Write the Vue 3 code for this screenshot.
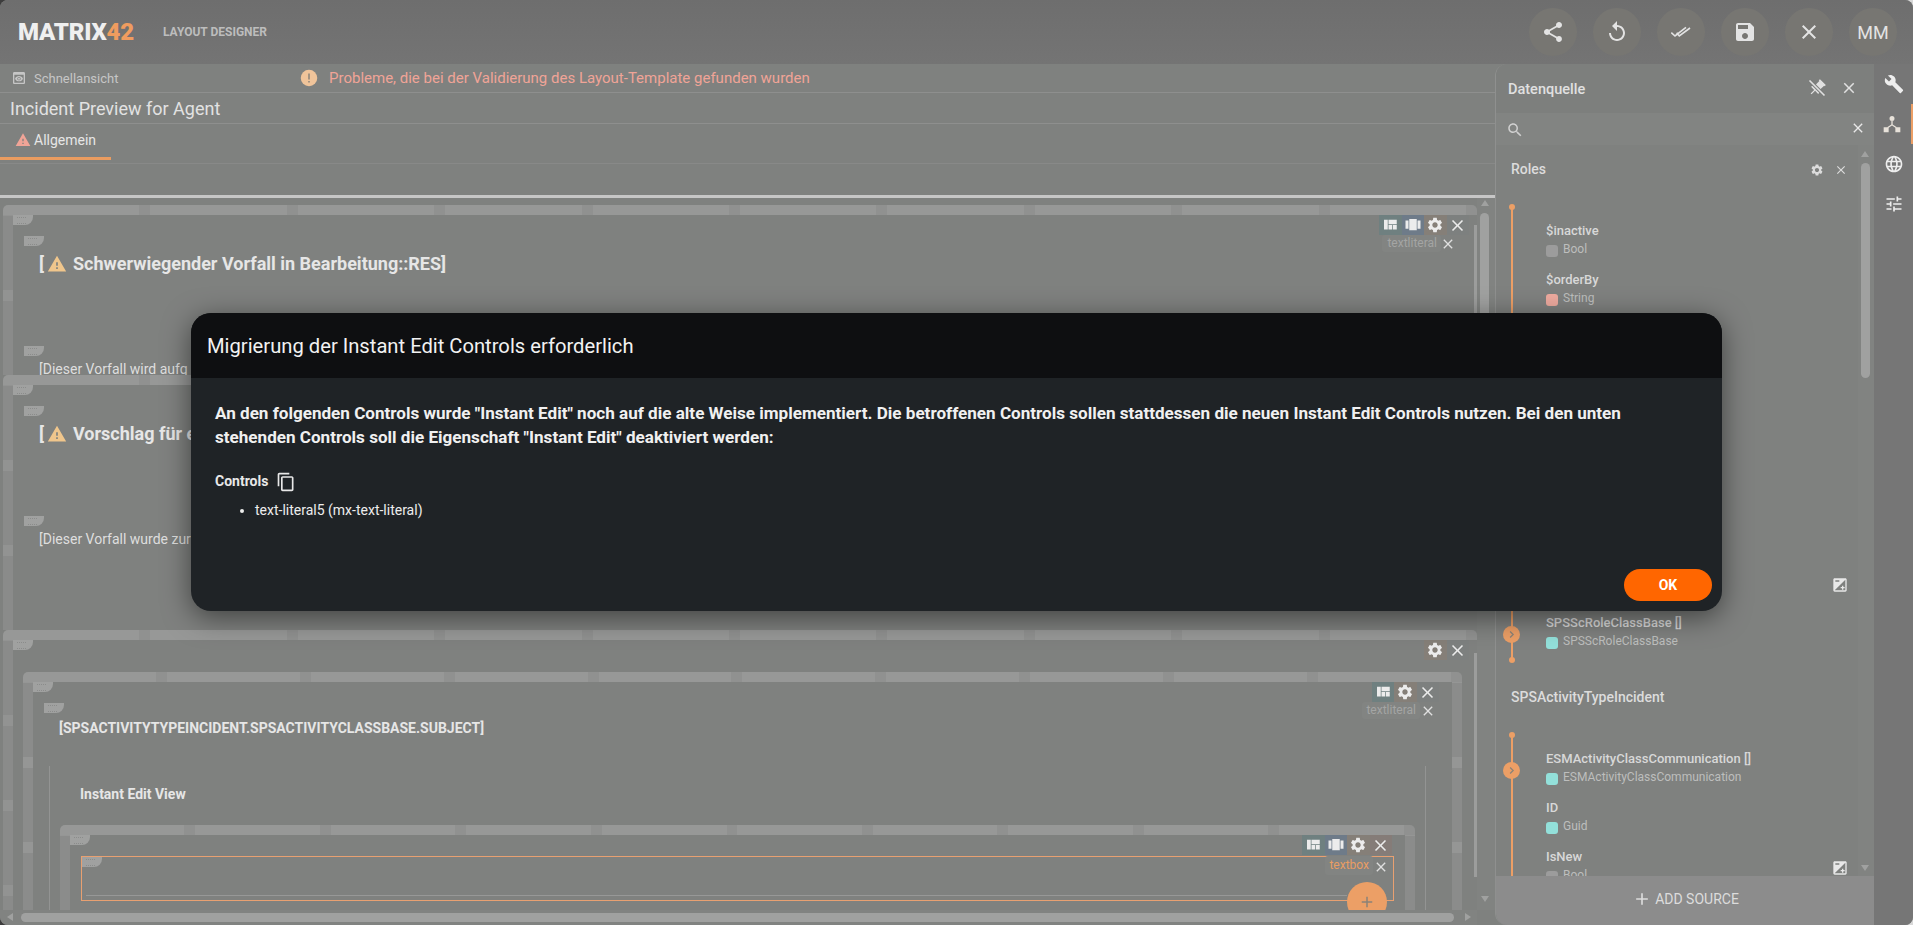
<script setup>
const icons = {
  share: 'M18 16.08c-.76 0-1.44.3-1.96.77L8.91 12.7c.05-.23.09-.46.09-.7s-.04-.47-.09-.7l7.05-4.11c.54.5 1.25.81 2.04.81 1.66 0 3-1.34 3-3s-1.34-3-3-3-3 1.34-3 3c0 .24.04.47.09.7L8.04 9.81C7.5 9.31 6.79 9 6 9c-1.66 0-3 1.34-3 3s1.34 3 3 3c.79 0 1.5-.31 2.04-.81l7.12 4.16c-.05.21-.08.43-.08.65 0 1.61 1.31 2.92 2.92 2.92s2.92-1.31 2.92-2.92-1.31-2.92-2.92-2.92z',
  replay: 'M12 5V1L7 6l5 5V7c3.31 0 6 2.69 6 6s-2.69 6-6 6-6-2.69-6-6H4c0 4.42 3.58 8 8 8s8-3.58 8-8-3.58-8-8-8z',
  save: 'M17 3H5c-1.11 0-2 .9-2 2v14c0 1.1.89 2 2 2h14c1.1 0 2-.9 2-2V7l-4-4zm-5 16c-1.66 0-3-1.34-3-3s1.34-3 3-3 3 1.34 3 3-1.34 3-3 3zm3-10H5V5h10v4z',
  close: 'M19 6.41L17.59 5 12 10.59 6.41 5 5 6.41 10.59 12 5 17.59 6.41 19 12 13.41 17.59 19 19 17.59 13.41 12z',
  wrench: 'M22.7 19l-9.1-9.1c.9-2.3.4-5-1.5-6.9-2-2-5-2.4-7.4-1.3L9 6 6 9 1.6 4.7C.4 7.1.9 10.1 2.9 12.1c1.9 1.9 4.6 2.4 6.9 1.5l9.1 9.1c.4.4 1 .4 1.4 0l2.3-2.3c.5-.4.5-1.1.1-1.4z',
  globe: 'M11.99 2C6.47 2 2 6.48 2 12s4.47 10 9.99 10C17.52 22 22 17.52 22 12S17.52 2 11.99 2zm6.93 6h-2.95c-.32-1.25-.78-2.45-1.38-3.56 1.84.63 3.37 1.91 4.33 3.56zM12 4.04c.83 1.2 1.48 2.53 1.91 3.96h-3.82c.43-1.43 1.08-2.76 1.91-3.96zM4.26 14C4.1 13.36 4 12.69 4 12s.1-1.36.26-2h3.38c-.08.66-.14 1.32-.14 2 0 .68.06 1.34.14 2H4.26zm.82 2h2.95c.32 1.25.78 2.45 1.38 3.56-1.84-.63-3.37-1.9-4.33-3.56zm2.95-8H5.08c.96-1.66 2.49-2.93 4.33-3.56C8.81 5.55 8.35 6.75 8.03 8zM12 19.96c-.83-1.2-1.48-2.53-1.91-3.96h3.82c-.43 1.43-1.08 2.76-1.91 3.96zM14.34 14H9.66c-.09-.66-.16-1.32-.16-2 0-.68.07-1.35.16-2h4.68c.09.65.16 1.32.16 2 0 .68-.07 1.34-.16 2zm.25 5.56c.6-1.11 1.06-2.31 1.38-3.56h2.95c-.96 1.65-2.49 2.93-4.33 3.56zM16.36 14c.08-.66.14-1.32.14-2 0-.68-.06-1.34-.14-2h3.38c.16.64.26 1.31.26 2s-.1 1.36-.26 2h-3.38z',
  tune: 'M3 17v2h6v-2H3zM3 5v2h10V5H3zm10 16v-2h8v-2h-8v-2h-2v6h2zM7 9v2H3v2h4v2h2V9H7zm14 4v-2H11v2h10zm-6-4h2V7h4V5h-4V3h-2v6z',
  gear: 'M19.14 12.94c.04-.3.06-.61.06-.94 0-.32-.02-.64-.07-.94l2.03-1.58c.18-.14.23-.41.12-.61l-1.92-3.32c-.12-.22-.37-.29-.59-.22l-2.39.96c-.5-.38-1.03-.7-1.62-.94l-.36-2.54c-.04-.24-.24-.41-.48-.41h-3.84c-.24 0-.43.17-.47.41l-.36 2.54c-.59.24-1.13.57-1.62.94l-2.39-.96c-.22-.08-.47 0-.59.22L2.74 8.87c-.12.21-.08.47.12.61l2.03 1.58c-.05.3-.09.63-.09.94s.02.64.07.94l-2.03 1.58c-.18.14-.23.41-.12.61l1.92 3.32c.12.22.37.29.59.22l2.39-.96c.5.38 1.03.7 1.62.94l.36 2.54c.05.24.24.41.48.41h3.84c.24 0 .44-.17.47-.41l.36-2.54c.59-.24 1.13-.56 1.62-.94l2.39.96c.22.08.47 0 .59-.22l1.92-3.32c.12-.22.07-.47-.12-.61l-2.01-1.58zM12 15.6c-1.98 0-3.6-1.62-3.6-3.6s1.62-3.6 3.6-3.6 3.6 1.62 3.6 3.6-1.62 3.6-3.6 3.6z',
  search: 'M15.5 14h-.79l-.28-.27C15.41 12.59 16 11.11 16 9.5 16 5.91 13.09 3 9.5 3S3 5.91 3 9.5 5.91 16 9.5 16c1.61 0 3.09-.59 4.23-1.57l.27.28v.79l5 4.99L20.49 19l-4.99-5zm-6 0C7.01 14 5 11.99 5 9.5S7.01 5 9.5 5 14 7.01 14 9.5 11.99 14 9.5 14z',
  copy: 'M16 1H4c-1.1 0-2 .9-2 2v14h2V3h12V1zm3 4H8c-1.1 0-2 .9-2 2v14c0 1.1.9 2 2 2h11c1.1 0 2-.9 2-2V7c0-1.1-.9-2-2-2zm0 16H8V7h11v14z',
  warning: 'M1 21h22L12 2 1 21zm12-3h-2v-2h2v2zm0-4h-2v-4h2v4z',
  quilt: 'M10 18h5v-6h-5v6zm-6 0h5V5H4v13zm12 0h5v-6h-5v6zM10 5v6h11V5H10z',
  carousel: 'M7 19h10V4H7v15zm-5-2h4V6H2v11zM18 6v11h4V6h-4z',
  pin: 'M16 12V4h1V2H7v2h1v8l-2 2v2h5.2v6h1.6v-6H18v-2l-2-2z',
  preview: 'M19 3H5c-1.11 0-2 .9-2 2v14c0 1.1.89 2 2 2h14c1.1 0 2-.9 2-2V5c0-1.1-.89-2-2-2zm0 16H5V7h14v12zm-5.5-6c0 .83-.67 1.5-1.5 1.5s-1.5-.67-1.5-1.5.67-1.5 1.5-1.5 1.5.67 1.5 1.5zM12 9c-2.73 0-5.06 1.66-6 4 .94 2.34 3.27 4 6 4s5.06-1.66 6-4c-.94-2.34-3.27-4-6-4zm0 6.5c-1.38 0-2.5-1.12-2.5-2.5s1.12-2.5 2.5-2.5 2.5 1.12 2.5 2.5-1.12 2.5-2.5 2.5z',
  exposure: 'M15 17v2h2v-2h2v-2h-2v-2h-2v2h-2v2h2zm5-15H4c-1.1 0-2 .9-2 2v16c0 1.1.9 2 2 2h16c1.1 0 2-.9 2-2V4c0-1.1-.9-2-2-2zM5 5h6v2H5V5zm15 15H4L20 4v16z',
  plus: 'M19 13h-6v6h-2v-6H5v-2h6V5h2v6h6v2z',
  hub: 'M12 2.5a3 3 0 1 1 0 6 3 3 0 0 1 0-6zM11.2 8h1.6v4.6l4.6 3-.9 1.3-4.5-3-4.5 3-.9-1.3 4.6-3zM2 16h6v6H2zM16 16h6v6h-6z'
}

const headerButtons = ['share', 'replay', 'checks', 'save', 'close']
const railButtons = ['wrench', 'hub', 'globe', 'tune']
</script>

<template>
  <div class="app">
    <header class="topbar">
      <div class="logo">MATRIX<span>42</span></div>
      <div class="product">LAYOUT DESIGNER</div>
      <div class="top-actions">
        <button v-for="b in headerButtons" :key="b" class="round">
          <svg v-if="b === 'checks'" class="i20 stroked" viewBox="0 0 20 20" stroke="currentColor" stroke-width="1.6">
            <path d="M.3 10.7L4 14 15 5.3M5.7 10.7L8.3 14 19 6" />
          </svg>
          <svg v-else class="i24" viewBox="0 0 24 24"><path :d="icons[b]" /></svg>
        </button>
        <button class="round initials">MM</button>
      </div>
    </header>

    <div class="workspace">
      <main class="designer">
        <div class="quickbar">
          <div class="quick">
            <svg class="i16" viewBox="0 0 24 24"><path :d="icons.preview" /></svg>
            <span>Schnellansicht</span>
          </div>
          <div class="problem">
            <svg class="i18" viewBox="0 0 24 24">
              <circle cx="12" cy="12" r="11" fill="#f0c49a" />
              <rect x="11" y="6" width="2" height="8" fill="#8a8378" />
              <rect x="11" y="16" width="2" height="2" fill="#8a8378" />
            </svg>
            <span>Probleme, die bei der Validierung des Layout-Template gefunden wurden</span>
          </div>
        </div>
        <div class="doc-title">Incident Preview for Agent</div>
        <div class="tabs">
          <div class="tab">
            <svg class="i16 tab-warn" viewBox="0 0 24 24"><path :d="icons.warning" /></svg>
            <span>Allgemein</span>
          </div>
        </div>
        <div class="toolstrip"></div>

        <div class="stage">
          <div class="canvas-row">
            <div class="canvas">
              <section class="block block-a">
                <i class="tag tag-block"></i>
                <div class="controls ctl-a">
                  <span class="cell c-quilt"><svg viewBox="0 0 24 24"><path :d="icons.quilt" /></svg></span>
                  <span class="cell c-carousel"><svg viewBox="0 0 24 24"><path :d="icons.carousel" /></svg></span>
                  <span class="cell c-gear"><svg viewBox="0 0 24 24"><path :d="icons.gear" /></svg></span>
                  <span class="cell c-close"><svg viewBox="0 0 24 24"><path :d="icons.close" /></svg></span>
                </div>
                <div class="chip chip-a"><span>textliteral</span><svg class="i16" viewBox="0 0 24 24"><path :d="icons.close" /></svg></div>
                <div class="strip strip-a"></div>
                <div class="literal heading">
                  <i class="tag"></i>
                  <span>[</span><svg class="warn" viewBox="0 0 24 24"><path :d="icons.warning" /></svg><span>Schwerwiegender Vorfall in Bearbeitung::RES]</span>
                </div>
                <div class="literal plain plain-a">
                  <i class="tag"></i>
                  <span>[Dieser Vorfall wird aufg</span>
                </div>
              </section>

              <section class="block block-b">
                <i class="tag tag-block"></i>
                <div class="literal heading">
                  <i class="tag"></i>
                  <span>[</span><svg class="warn" viewBox="0 0 24 24"><path :d="icons.warning" /></svg><span>Vorschlag für e</span>
                </div>
                <div class="literal plain plain-b">
                  <i class="tag"></i>
                  <span>[Dieser Vorfall wurde zur</span>
                </div>
              </section>

              <section class="block block-c">
                <i class="tag tag-block"></i>
                <div class="controls ctl-c">
                  <span class="cell c-gear"><svg viewBox="0 0 24 24"><path :d="icons.gear" /></svg></span>
                  <span class="cell c-close"><svg viewBox="0 0 24 24"><path :d="icons.close" /></svg></span>
                </div>
                <div class="strip strip-c"></div>

                <section class="block block-c1">
                  <i class="tag tag-block"></i>
                  <div class="controls ctl-c1">
                    <span class="cell c-quilt"><svg viewBox="0 0 24 24"><path :d="icons.quilt" /></svg></span>
                    <span class="cell c-gear"><svg viewBox="0 0 24 24"><path :d="icons.gear" /></svg></span>
                    <span class="cell c-close"><svg viewBox="0 0 24 24"><path :d="icons.close" /></svg></span>
                  </div>
                  <div class="chip chip-c1"><span>textliteral</span><svg class="i16" viewBox="0 0 24 24"><path :d="icons.close" /></svg></div>
                  <div class="literal subject">
                    <i class="tag"></i>
                    <span>[SPSACTIVITYTYPEINCIDENT.SPSACTIVITYCLASSBASE.SUBJECT]</span>
                  </div>
                  <div class="instant">
                    <div class="instant-title">Instant Edit View</div>
                    <section class="block block-c2">
                      <i class="tag tag-block"></i>
                      <div class="controls ctl-c2">
                        <span class="cell c-quilt"><svg viewBox="0 0 24 24"><path :d="icons.quilt" /></svg></span>
                        <span class="cell c-carousel"><svg viewBox="0 0 24 24"><path :d="icons.carousel" /></svg></span>
                        <span class="cell c-gear"><svg viewBox="0 0 24 24"><path :d="icons.gear" /></svg></span>
                        <span class="cell c-close2"><svg viewBox="0 0 24 24"><path :d="icons.close" /></svg></span>
                      </div>
                      <div class="selected">
                        <i class="tag"></i>
                        <div class="input-line"></div>
                        <div class="chip chip-box"><span>textbox</span><svg class="i16" viewBox="0 0 24 24"><path :d="icons.close" /></svg></div>
                        <div class="fab"><svg class="i18" viewBox="0 0 24 24"><path :d="icons.plus" /></svg></div>
                      </div>
                    </section>
                  </div>
                </section>
              </section>
            </div>
            <div class="vscroll">
              <i class="arrow up"></i>
              <div class="thumb"></div>
              <i class="arrow down"></i>
            </div>
          </div>
          <div class="hscroll">
            <i class="arrow left"></i>
            <div class="hthumb"></div>
            <i class="arrow right"></i>
          </div>
        </div>
      </main>

      <aside class="panel">
        <div class="panel-head">
          <span>Datenquelle</span>
          <svg class="i20 pin" viewBox="0 0 24 24">
            <path transform="rotate(45 12 12)" :d="icons.pin" />
            <path class="pin-gap" d="M3 3L21 21" />
            <path class="pin-slash" d="M3 3L21 21" />
          </svg>
          <svg class="i18 panel-x" viewBox="0 0 24 24"><path :d="icons.close" /></svg>
        </div>
        <div class="panel-search">
          <svg class="i18" viewBox="0 0 24 24"><path :d="icons.search" /></svg>
          <svg class="i16 search-x" viewBox="0 0 24 24"><path :d="icons.close" /></svg>
        </div>
        <div class="panel-body">
          <div class="sources">
            <div class="source-head">
              <span>Roles</span>
              <svg class="i14 role-gear" viewBox="0 0 24 24"><path :d="icons.gear" /></svg>
              <svg class="i14 role-x" viewBox="0 0 24 24"><path :d="icons.close" /></svg>
            </div>
            <div class="fields">
              <i class="rail-line"></i><i class="rail-dot top"></i><i class="rail-dot bottom"></i>
              <div class="field">
                <div class="fname">$inactive</div>
                <div class="ftype"><i class="sw grey"></i>Bool</div>
              </div>
              <div class="field">
                <div class="fname">$orderBy</div>
                <div class="ftype"><i class="sw red"></i>String</div>
              </div>
              <div class="covered">
                <svg class="i16 expo covered-expo" viewBox="0 0 24 24"><path :d="icons.exposure" /></svg>
              </div>
              <div class="field">
                <i class="expand"><svg class="stroked" viewBox="0 0 24 24" stroke="currentColor" stroke-width="2.4"><path d="M9.5 6.5L15 12l-5.5 5.5" /></svg></i>
                <div class="fname">SPSScRoleClassBase []</div>
                <div class="ftype"><i class="sw cyan"></i>SPSScRoleClassBase</div>
              </div>
            </div>

            <div class="source-head second"><span>SPSActivityTypeIncident</span></div>
            <div class="fields open">
              <i class="rail-line"></i><i class="rail-dot top"></i>
              <div class="field">
                <i class="expand"><svg class="stroked" viewBox="0 0 24 24" stroke="currentColor" stroke-width="2.4"><path d="M9.5 6.5L15 12l-5.5 5.5" /></svg></i>
                <div class="fname">ESMActivityClassCommunication []</div>
                <div class="ftype"><i class="sw cyan"></i>ESMActivityClassCommunication</div>
              </div>
              <div class="field">
                <div class="fname">ID</div>
                <div class="ftype"><i class="sw cyan"></i>Guid</div>
              </div>
              <div class="field">
                <div class="fname">IsNew</div>
                <div class="ftype"><i class="sw grey"></i>Bool</div>
                <svg class="i16 expo field-expo" viewBox="0 0 24 24"><path :d="icons.exposure" /></svg>
              </div>
            </div>
          </div>
          <div class="panel-scroll">
            <i class="arrow up"></i>
            <div class="panel-thumb"></div>
            <i class="arrow down"></i>
          </div>
        </div>
        <div class="add-source">
          <svg class="i20" viewBox="0 0 24 24"><path :d="icons.plus" /></svg>
          <span>ADD SOURCE</span>
        </div>
      </aside>

      <nav class="rail">
        <div v-for="r in railButtons" :key="r" class="rail-btn" :class="{ active: r === 'hub' }">
          <svg class="i20" viewBox="0 0 24 24"><path :d="icons[r]" /></svg>
        </div>
      </nav>
    </div>

    <div class="scrim">
      <div class="dialog">
        <div class="dialog-head">Migrierung der Instant Edit Controls erforderlich</div>
        <div class="dialog-body">
          <p class="lead">An den folgenden Controls wurde "Instant Edit" noch auf die alte Weise implementiert. Die betroffenen Controls sollen stattdessen die neuen Instant Edit Controls nutzen. Bei den unten stehenden Controls soll die Eigenschaft "Instant Edit" deaktiviert werden:</p>
          <div class="controls-title">
            <span>Controls</span>
            <svg class="i20" viewBox="0 0 24 24"><path :d="icons.copy" /></svg>
          </div>
          <ul class="control-list">
            <li>text-literal5 (mx-text-literal)</li>
          </ul>
        </div>
        <div class="dialog-foot"><button class="ok">OK</button></div>
      </div>
    </div>
  </div>
</template>

<style>
html, body { margin: 0; overflow: hidden; background: linear-gradient(90deg, #3d3d3d 50%, #d8d8d8 50%); }
</style>

<style scoped>
* { box-sizing: border-box; }
svg { fill: currentColor; flex: none; display: block; }
svg.stroked { fill: none; }
i { display: block; font-style: normal; }
.i14 { width: 14px; height: 14px; }
.i16 { width: 16px; height: 16px; }
.i18 { width: 18px; height: 18px; }
.i20 { width: 20px; height: 20px; }
.i24 { width: 24px; height: 24px; }

.app {
  position: relative;
  width: 1913px;
  height: 925px;
  overflow: hidden;
  display: flex;
  flex-direction: column;
  border-radius: 8px;
  background: #7f817f;
  color: #e0e0e0;
  font-family: Roboto, "Liberation Sans", sans-serif;
}

.topbar {
  height: 64px;
  flex: none;
  display: flex;
  align-items: center;
  padding: 0 16px 0 18px;
  background: linear-gradient(#6e6e6e, #747474);
}
.logo {
  font-weight: 900;
  font-size: 24px;
  line-height: 24px;
  letter-spacing: -0.2px;
  color: #efefef;
}
.logo span { color: #ef9c5f; }
.product {
  margin-left: 29px;
  font-size: 12px;
  font-weight: 700;
  color: #bdbdbd;
}
.top-actions { margin-left: auto; display: flex; gap: 16px; }
.round {
  width: 48px;
  height: 48px;
  border: 0;
  padding: 0;
  border-radius: 50%;
  background: #777672;
  color: #e3e3e3;
  display: flex;
  align-items: center;
  justify-content: center;
  font-family: inherit;
}
.initials { font-size: 18px; }

.workspace { flex: 1; min-height: 0; display: flex; }

.designer { width: 1495px; flex: none; display: flex; flex-direction: column; min-height: 0; }
.quickbar {
  height: 29px;
  flex: none;
  display: flex;
  align-items: center;
  border-bottom: 1px solid #8e8f8e;
}
.quick { width: 300px; display: flex; align-items: center; gap: 7px; padding-left: 11px; color: #c6c6c6; font-size: 13px; }
.problem { display: flex; align-items: center; gap: 11px; color: #f0a497; font-size: 15px; }
.doc-title {
  height: 31px;
  flex: none;
  padding-left: 10px;
  display: flex;
  align-items: center;
  font-size: 18px;
  color: #e2e2e2;
  border-bottom: 1px solid #8e8f8e;
}
.tabs { height: 40px; flex: none; border-bottom: 1px solid #888988; }
.tab {
  width: 111px;
  height: 36px;
  display: flex;
  align-items: center;
  padding: 0 0 2px 15px;
  gap: 3px;
  font-size: 14px;
  color: #e6e6e6;
  border-bottom: 3px solid #ea9c60;
}
.tab-warn { color: #f0a497; }
.toolstrip { height: 34px; flex: none; border-bottom: 3px solid #c6c6c6; }

.stage { flex: 1; min-height: 0; display: flex; flex-direction: column; }
.canvas-row { flex: 1; min-height: 0; display: flex; }
.canvas { width: 1477px; flex: none; overflow: hidden; padding: 7px 0 0 3px; }

.block {
  --seg: 147.4px;
  position: relative;
  padding: 10px 10px 0;
  border-radius: 5px 5px 0 0;
  background-color: #7f817f;
  background-image:
    repeating-linear-gradient(90deg, #979897 0, #979897 calc(var(--seg) - 11px), #909190 calc(var(--seg) - 11px), #909190 var(--seg)),
    repeating-linear-gradient(180deg, #929392 0, #929392 11px, #8a8b8a 11px, #8a8b8a 85px);
  background-repeat: no-repeat;
  background-size: 100% 10px, 10px 100%;
  background-position: 0 0, 0 0;
}
.block-a { width: 1474px; height: 170px; }
.block-b { width: 1474px; height: 255px; }
.block-c { width: 1474px; height: 280px; }
.block-c1, .block-c2 {
  background-image:
    repeating-linear-gradient(90deg, #979897 0, #979897 calc(var(--seg) - 11px), #909190 calc(var(--seg) - 11px), #909190 var(--seg)),
    repeating-linear-gradient(180deg, #959695 0, #959695 11px, #8b8c8b 11px, #8b8c8b 85px),
    repeating-linear-gradient(180deg, #959695 0, #959695 11px, #8b8c8b 11px, #8b8c8b 85px);
  background-size: 100% 10px, 10px 100%, 10px 100%;
  background-position: 0 0, 0 0, 100% 0;
}
.block-c1 { --seg: 143.9px; width: 1439px; height: 270px; margin: 32px 0 0 10px; }
.block-c2 { --seg: 135.5px; width: 1355px; height: 120px; margin: 21px 0 0 10px; }

.tag {
  position: absolute;
  left: 0;
  top: 0;
  width: 20px;
  height: 10px;
  border-radius: 0 0 8px 0;
  background: #a0a1a0;
}
.tag::before {
  content: "";
  position: absolute;
  left: 4px;
  top: 2px;
  width: 9px;
  height: 5px;
  border-top: 1px dotted #8b8c8b;
  border-bottom: 1px dotted #8b8c8b;
}
.tag-block { left: 10px; top: 10px; }

.literal { position: relative; margin: 21px 0 0 11px; padding-left: 15px; }
.heading {
  padding-top: 16px;
  height: 40px;
  display: flex;
  align-items: center;
  font-size: 18px;
  line-height: 24px;
  font-weight: 700;
  color: #e6e6e6;
}
.warn { width: 20px; height: 20px; margin: 0 6px 0 3px; color: #f0c68c; }
.plain { font-size: 14px; line-height: 20px; color: #dedede; padding-top: 13px; }
.plain-a { margin-top: 70px; height: 29px; }
.plain-b { margin-top: 70px; }
.subject { padding-top: 15px; font-size: 14px; line-height: 20px; font-weight: 700; color: #e6e6e6; margin-bottom: 28px; }
.instant {
  margin-left: 16px;
  width: 1377px;
  height: 200px;
  border-left: 1px solid #939493;
  border-right: 1px solid #939493;
}
.instant-title { padding: 18px 0 0 30px; font-size: 14px; line-height: 20px; font-weight: 700; color: #e6e6e6; }

.controls { position: absolute; top: 10px; display: flex; height: 20px; }
.ctl-a { right: 8px; }
.ctl-c { right: 8px; }
.ctl-c1 { right: 23px; }
.ctl-c2 { right: 23px; }
.cell { width: 22.5px; height: 20px; display: flex; align-items: center; justify-content: center; color: #ececec; }
.cell svg { width: 18px; height: 18px; }
.c-quilt { background: #6f8080; }
.c-carousel { background: #6e7b89; }
.c-gear { background: #857f78; }
.c-close { background: #7d807f; }
.c-close2 { background: #857c78; }
.c-close svg, .c-close2 svg { width: 19px; height: 19px; }

.chip { position: absolute; display: flex; align-items: center; font-size: 12px; color: #a4a5a4; }
.chip span { background: #828482; padding: 0 4px; border-radius: 3px; line-height: 17px; }
.chip svg { color: #e0e0e0; margin: 2px 0 0 0; }
.chip-a { top: 29px; right: 21px; }
.chip-a span { margin-right: -1px; padding-left: 5px; }
.chip-c1 { top: 29px; right: 26px; }

.strip { position: absolute; right: 0; width: 3px; background: #9c9d9c; }
.strip-a { top: 20px; bottom: 0; }
.strip-c { top: 23px; height: 224px; }

.selected {
  position: relative;
  margin: 21px 0 0 11px;
  width: 1313px;
  height: 45px;
  border: 1px solid #e8a071;
}
.input-line { position: absolute; left: 4px; right: 46px; bottom: 4px; height: 1px; background: #979897; }
.chip-box { top: -1px; right: 4px; color: #e99d63; }
.chip-box span { padding: 1px 4px; }
.fab {
  position: absolute;
  right: 6px;
  top: 25px;
  width: 40px;
  height: 40px;
  border-radius: 50%;
  background: #ec9f66;
  color: #8b8378;
  display: flex;
  align-items: flex-start;
  justify-content: center;
  padding-top: 11px;
}

.vscroll { flex: 1; position: relative; background: #818381; }
.thumb { position: absolute; left: 3px; top: 15px; width: 9px; height: 340px; border-radius: 5px; background: #a0a1a0; }
.arrow { position: absolute; width: 0; height: 0; border-style: solid; border-color: transparent; }
.arrow.up { top: 2px; border-width: 0 4px 6px; border-bottom-color: #a0a1a0; }
.arrow.down { bottom: 8px; border-width: 6px 4px 0; border-top-color: #a0a1a0; }
.vscroll .arrow { left: 4px; }
.hscroll { height: 15px; flex: none; position: relative; background: #818381; margin-right: 18px; }
.hthumb { position: absolute; left: 21px; width: 1433px; top: 3px; height: 9px; border-radius: 5px; background: #a0a1a0; }
.arrow.left { left: 7px; top: 3px; border-width: 4px 6px 4px 0; border-right-color: #a0a1a0; }
.arrow.right { left: 1465px; top: 3px; border-width: 4px 0 4px 6px; border-left-color: #a0a1a0; }

.panel {
  width: 379px;
  flex: none;
  display: flex;
  flex-direction: column;
  min-height: 0;
  border-left: 1px solid #8f908f;
  border-radius: 12px 0 0 12px;
  overflow: hidden;
  background: #7f817f;
}
.panel-head {
  height: 49px;
  flex: none;
  display: flex;
  align-items: center;
  padding: 2px 16px 0 12px;
  font-size: 14.5px;
  font-weight: 500;
  background: #7d7f7d;
  color: #e0e0e0;
}
.pin { margin-left: auto; margin-top: -3px; }
.pin-gap { fill: none; stroke: #7d7f7d; stroke-width: 4.5; }
.pin-slash { fill: none; stroke: currentColor; stroke-width: 2; }
.panel-x { margin: -3px 0 0 13px; }
.panel-search {
  height: 32px;
  flex: none;
  display: flex;
  align-items: center;
  padding: 2px 8px 0 10px;
  background: #828482;
  color: #d0d0d0;
}
.search-x { margin-left: auto; margin-top: -4px; color: #e8e8e8; }
.panel-body { flex: 1; min-height: 0; display: flex; }
.sources { flex: 1; min-width: 0; overflow: hidden; }
.panel-scroll { width: 16px; flex: none; position: relative; background: #818381; }
.panel-scroll .arrow { left: 3px; }
.panel-scroll .arrow.up { top: 6px; }
.panel-scroll .arrow.down { bottom: 5px; }
.panel-thumb { position: absolute; left: 3px; top: 18px; width: 9px; height: 215px; border-radius: 5px; background: #a0a1a0; }
.source-head {
  position: relative;
  height: 48px;
  display: flex;
  align-items: center;
  padding-left: 15px;
  font-size: 14px;
  font-weight: 500;
  color: #dcdcdc;
}
.source-head.second { margin-top: 9px; }
.role-gear { position: absolute; left: 314px; top: 18px; }
.role-x { position: absolute; left: 338px; top: 18px; }
.fields { position: relative; padding: 30px 0 0 50px; }
.rail-line { position: absolute; left: 15px; top: 14px; bottom: 4px; width: 2px; background: #ec9f66; }
.fields.open .rail-line { bottom: -60px; }
.rail-dot { position: absolute; left: 13px; width: 6px; height: 6px; border-radius: 50%; background: #ec9f66; }
.rail-dot.top { top: 11px; }
.rail-dot.bottom { bottom: 1px; }
.field { position: relative; height: 49px; }
.fname { font-size: 13px; line-height: 16px; font-weight: 500; color: #d8d8d8; }
.ftype { display: flex; align-items: center; font-size: 12px; line-height: 20px; color: #bdbebd; }
.sw { width: 12px; height: 12px; border-radius: 3px; margin: 3px 5px 0 0; }
.sw.grey { background: #9c9c9c; }
.sw.red { background: #eeaa9f; }
.sw.cyan { background: #93e0da; }
.covered { position: relative; height: 294px; }
.expo { position: absolute; color: #e8e8e8; }
.covered-expo { left: 286px; top: 256px; }
.field-expo { left: 286px; top: 11px; }
.expand {
  position: absolute;
  left: -43px;
  top: 11px;
  width: 17px;
  height: 17px;
  border-radius: 50%;
  background: #ec9f66;
  color: #8b8378;
}
.expand svg { width: 13px; height: 13px; margin: 2px; }

.add-source {
  height: 49px;
  flex: none;
  display: flex;
  align-items: center;
  justify-content: center;
  gap: 3px;
  padding: 0 0 3px 1px;
  background: #8c8c8c;
  color: #dcdcdc;
  font-size: 14px;
  font-weight: 400;
}

.rail { flex: 1; background: #767676; }
.rail-btn { height: 40px; display: flex; align-items: center; justify-content: center; color: #eeeeee; }
.rail-btn.active { border-right: 2px solid #ec9f66; padding-right: 2px; color: #e8e2da; }

.scrim { position: absolute; inset: 0; padding-bottom: 1px; display: flex; align-items: center; justify-content: center; }
.dialog {
  width: 1531px;
  height: 298px;
  border-radius: 20px;
  overflow: hidden;
  display: flex;
  flex-direction: column;
  background: #1f2326;
  color: #fff;
  box-shadow: 0 6px 28px rgba(0, 0, 0, .5);
}
.dialog-head {
  height: 65px;
  flex: none;
  display: flex;
  align-items: center;
  padding-left: 16px;
  background: #0e0f11;
  font-size: 20.2px;
  color: #f2f2f2;
}
.dialog-body { flex: 1; padding: 23px 24px 0; }
.lead { margin: 0; font-size: 17.09px; line-height: 24px; font-weight: 700; color: #f0f0f0; }
.controls-title { display: flex; align-items: center; gap: 8px; margin-top: 21px; font-size: 14px; font-weight: 700; color: #e8e8e8; }
.controls-title svg { margin-top: 2px; }
.control-list { margin: 8px 0 0; padding-left: 40px; font-size: 14px; line-height: 20px; color: #ededed; }
.dialog-foot { height: 42px; flex: none; padding-right: 10px; display: flex; justify-content: flex-end; }
.ok {
  width: 88px;
  height: 32px;
  border: 0;
  border-radius: 16px;
  background: #ff6600;
  color: #fff;
  font-family: inherit;
  font-size: 14px;
  font-weight: 700;
}
</style>
